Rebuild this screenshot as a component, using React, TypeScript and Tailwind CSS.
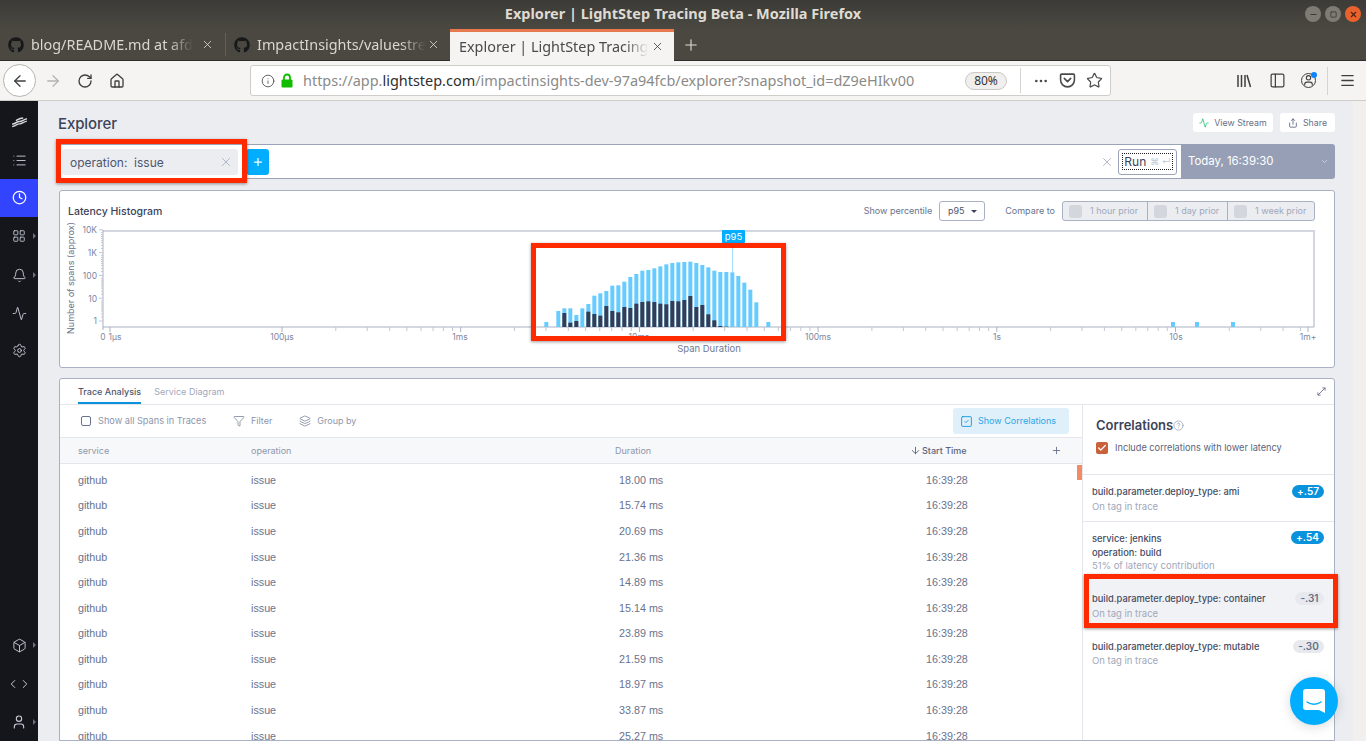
import React from "react";
import {
  X, Plus, ArrowLeft, ArrowRight, RotateCw, Home, Info, Star, Activity, Share, Filter, Layers,
  ArrowDown, SquareCheck, Check, HelpCircle, List, Clock, LayoutGrid, Bell, Settings, Box, ChevronLeft,
  ChevronRight, User, ChevronDown, Menu, PanelLeft, MoreHorizontal, Minus, Square,
} from "lucide-react";
import { FaGithub } from "react-icons/fa";

const light: [number, number][] = [[73,291],[109,258],[127,250],[145,250],[163,270],[181,250],[199,237],[217,212],[235,205],[253,198],[271,182],[289,181],[307,170],[325,156],[343,147],[361,137],[379,135],[397,130],[415,124],[433,118],[451,114],[469,112],[487,111],[505,110],[523,114],[541,120],[559,127],[577,137],[595,141],[613,141],[631,142],[649,153],[667,173],[685,194],[703,232],[739,291]];
const dark: [number, number][] = [[127,264],[145,293],[163,288],[199,260],[217,267],[235,272],[253,243],[271,258],[289,262],[307,246],[325,249],[343,236],[361,231],[379,229],[397,231],[415,236],[433,238],[451,228],[469,229],[487,225],[505,213],[523,246],[541,240],[559,268],[577,286],[595,303],[613,305]];

const rows = ["18.00","15.74","20.69","21.36","14.89","15.14","23.89","21.59","18.97","33.87","25.27"];
const decades = [282, 460.7, 639.4, 818.1, 996.8, 1175.5];
const minor = [2,3,4,5,6,7,8,9].map((n) => Math.log10(n) * 178.7);
const xTicks: number[] = [];
decades.forEach((d, i) => {
  minor.forEach((m) => {
    const t = d + m;
    if (i < 5 || t < 1304) xTicks.push(t);
  });
});
const xLabels: [string, number][] = [["0",103],["1µs",115],["100µs",282],["1ms",460],["10ms",639],["100ms",818],["1s",997],["10s",1176],["1m+",1308]];
const yLabels: [string, number][] = [["10K",230],["1K",253],["100",276],["10",299],["1",321]];

function Chart() {
  return (
    <svg viewBox="60 225 1273 131" className="block h-[131px] w-[1273px] overflow-visible" style={{ fontFamily: "Inter, sans-serif" }}>
      <path d="M103 231H1314V327" fill="none" stroke="#d3d6df" strokeWidth="2" />
      <path d="M103 230V330M103 327H1314" fill="none" stroke="#a9b1c4" strokeWidth="1" />
      {[0,1,2,3,4].map((k) =>
        [0,4,7,10,12,14,16,18,20].map((o) =>
          k === 4 && o > 0 ? null : <line key={`${k}${o}`} x1={o === 0 ? 99 : 101} x2="103" y1={321 - k * 22.8 + (o ? -o : 0)} y2={321 - k * 22.8 + (o ? -o : 0)} stroke="#c3c8d5" strokeWidth="1" />
        )
      )}
      {yLabels.map(([t, y]) => (
        <text key={t} x="97" y={y + 3} textAnchor="end" fontSize="8.5" fill="#7d88a3">{t}</text>
      ))}
      <text transform="translate(74 278) rotate(-90)" textAnchor="middle" fontSize="9" fill="#69738d">Number of spans (approx)</text>
      {xTicks.map((t, i) => (
        <line key={i} x1={t} x2={t} y1="327" y2="331" stroke="#c3c8d5" />
      ))}
      {[110, ...decades, 1308].map((t) => (
        <line key={t} x1={t} x2={t} y1="327" y2="332" stroke="#a9b1c4" />
      ))}
      {xLabels.map(([t, x]) => (
        <text key={t} x={x} y="340" textAnchor="middle" fontSize="8.5" fill="#7d88a3">{t}</text>
      ))}
      <text x="709" y="352" textAnchor="middle" fontSize="9.5" fill="#6f7a94">Span Duration</text>
      {light.map(([x, y]) => (
        <rect key={x} x={520 + x / 3} y={225 + y / 3} width="4" height={327 - 225 - y / 3} fill="#66ccff" />
      ))}
      {dark.map(([x, y]) => (
        <rect key={x} x={520 + x / 3} y={225 + y / 3} width="4" height={327 - 225 - y / 3} fill="#363c54" />
      ))}
      {[1171, 1195, 1231].map((x) => (
        <rect key={x} x={x} y="322" width="4" height="5" fill="#66ccff" />
      ))}
      <line x1="732.5" x2="732.5" y1="243" y2="272" stroke="#a6dffc" />
      <rect x="722" y="230" width="23" height="13" rx="1" fill="#00adff" />
      <text x="733.5" y="240" textAnchor="middle" fontSize="9.5" fill="#ffffff">p95</text>
    </svg>
  );
}

function TabItem({ title, w, close }: { title: string; w: string; close: string }) {
  return (
    <div className={`flex h-full items-center ${w} pl-2 relative`}>
      <FaGithub size={16} color="#17181a" className="shrink-0" />
      <span className="ml-[7px] whitespace-nowrap text-[14.4px] text-[#d9d7d1]" style={{ maskImage: "linear-gradient(to right, black 85%, transparent)" }}>{title}</span>
      <X size={13} className={`absolute ${close} text-[#dddbd6]`} strokeWidth={1.5} />
    </div>
  );
}

function Corr({ lines, sub, val, pos, cls, pill, subCls = "" }: { lines: string[]; sub: string; val: string; pos: boolean; cls: string; pill: string; subCls?: string }) {
  return (
    <div className={`relative pl-[9px] ${cls}`}>
      {lines.map((l) => (
        <div key={l} className="text-[9.3px] leading-[14px] text-[#454b61] font-medium">{l}</div>
      ))}
      <div className={`text-[9.5px] leading-[14px] text-[#a0a8bc] ${subCls}`}>{sub}</div>
      <span className={`absolute right-[10px] top-[10px] h-[13px] ${pill} rounded-full text-[10px] font-semibold leading-[13px] text-center ${pos ? "bg-[#0a93dc] text-white" : "bg-[#e7e9ee] text-[#666e85]"}`}>{val}</span>
    </div>
  );
}

const Nav = ({ children, cls = "h-[38px]" }: { children: React.ReactNode; cls?: string }) => (
  <div className={`flex w-full items-center justify-center text-[#c5c9d3] relative ${cls}`}>{children}</div>
);
const Caret = () => <span className="absolute right-[2px] top-1/2 -mt-[3px] h-0 w-0 border-y-[3px] border-l-[3px] border-y-transparent border-l-[#6a6f7d]" />;

export default function App() {
  return (
    <div className="relative flex h-[741px] w-[1366px] flex-col overflow-hidden bg-[#ebedf1]" style={{ fontFamily: "Inter, sans-serif" }}>
      {/* title bar */}
      <div className="relative h-[29px] shrink-0 bg-gradient-to-b from-[#3c3b37] to-[#4a4841] text-center text-[14.5px] font-bold leading-[27px] text-[#dfdbd2]" style={{ fontFamily: "'Noto Sans', sans-serif" }}>
        Explorer | LightStep Tracing Beta - Mozilla Firefox
        <div className="absolute right-[5px] top-[6px] flex gap-1">
          <span className="flex h-4 w-4 items-center justify-center rounded-full bg-[#7d7b74]"><Minus size={9} color="#3c3b37" strokeWidth={3} /></span>
          <span className="flex h-4 w-4 items-center justify-center rounded-full bg-[#7d7b74]"><Square size={7} color="#3c3b37" strokeWidth={3} /></span>
          <span className="flex h-4 w-4 items-center justify-center rounded-full bg-[#e9622d]"><X size={9} color="#4a2212" strokeWidth={3} /></span>
        </div>
      </div>
      {/* tabs */}
      <div className="flex h-[32px] shrink-0 items-stretch bg-[#4a4841] border-b border-[#2e2d29]" style={{ fontFamily: "'Noto Sans', sans-serif" }}>
        <TabItem title="blog/README.md at afd" w="w-[225px]" close="left-[201px]" />
        <div className="my-[4px] w-px bg-[#63615a]" />
        <TabItem title="ImpactInsights/valuestre" w="w-[224px]" close="left-[201px]" />
        <div className="relative flex h-[32px] w-[224px] items-center border-t-[3px] border-[#e8784d] bg-[#f5f4f2] pl-[9px]">
          <span className="whitespace-nowrap text-[14.4px] text-[#4a4a48]" style={{ maskImage: "linear-gradient(to right, black 88%, transparent)" }}>Explorer | LightStep Tracing</span>
          <X size={13} className="absolute left-[201px] text-[#3b3b3b]" strokeWidth={1.5} />
        </div>
        <div className="flex w-[34px] items-center justify-center"><Plus size={18} color="#dddbd6" strokeWidth={1.5} /></div>
      </div>
      {/* nav */}
      <div className="flex h-[40px] shrink-0 items-center border-b border-[#cfcdc9] bg-[#f5f4f2]">
        <div className="ml-[3px] flex h-[33px] w-[33px] items-center justify-center rounded-full border border-[#b5b3af] bg-white"><ArrowLeft size={18} color="#3f3f3f" strokeWidth={1.7} /></div>
        <ArrowRight size={18} color="#b4b3b0" strokeWidth={1.7} className="ml-[8px]" />
        <RotateCw size={16} color="#3f3f3f" strokeWidth={2} className="ml-[15px]" />
        <Home size={16} color="#3f3f3f" strokeWidth={2} className="ml-[16px]" />
        <div className="ml-[125px] flex h-[31px] w-[861px] items-center rounded-[3px] border border-[#cfcdc9] bg-white pl-[10px] text-[14.45px] text-[#8a8a88]" style={{ fontFamily: "'Noto Sans', sans-serif" }}>
          <Info size={14} color="#5a5a5a" strokeWidth={1.6} />
          <svg viewBox="0 0 12 15" className="ml-[6px] h-[15px] w-[12px] shrink-0"><path d="M3 7V4.5a3 3 0 016 0V7" fill="none" stroke="#12bc00" strokeWidth="1.8" /><rect x="0.5" y="6.5" width="11" height="8" rx="1" fill="#12bc00" /></svg>
          <span className="ml-[10px] w-[662px] whitespace-nowrap">https://app.<span className="text-[#2e2e2e]">lightstep.com</span>/impactinsights-dev-97a94fcb/explorer?snapshot_id=dZ9eHIkv00</span>
          <span className="flex h-[18px] w-[42px] items-center justify-center rounded-full border border-[#c9c8c5] bg-[#f0efed] text-[12px] text-[#333]">80%</span>
          <div className="ml-[13px] h-[25px] w-px bg-[#d5d4d1]" />
          <MoreHorizontal size={16} color="#4a4a4a" className="ml-[12px]" />
          <svg viewBox="0 0 16 16" className="ml-[10px] h-[17px] w-[17px]" fill="none" stroke="#4a4a4a" strokeWidth="1.5" strokeLinecap="round" strokeLinejoin="round"><path d="M2.5 2h11a1 1 0 011 1v4.5a6.5 6.5 0 01-13 0V3a1 1 0 011-1z" /><path d="M5 6l3 3 3-3" /></svg>
          <Star size={17} color="#4a4a4a" strokeWidth={1.7} className="ml-[10px]" />
        </div>
        <svg viewBox="0 0 16 16" className="ml-[125px] h-4 w-4" fill="none" stroke="#3f3f3f" strokeWidth="1.5"><path d="M2 2v12M5.5 2v12M9 2v12M11 2l3.5 12" /></svg>
        <PanelLeft size={17} color="#3f3f3f" strokeWidth={1.7} className="ml-[17px]" />
        <div className="relative ml-[15px]"><User size={15} color="#3f3f3f" className="rounded-full border border-[#3f3f3f]" /><span className="absolute -right-px -top-px h-[6px] w-[6px] rounded-full bg-[#0a84ff]" /></div>
        <div className="ml-[11px] h-[28px] w-px bg-[#d5d4d1]" />
        <Menu size={17} color="#3f3f3f" strokeWidth={1.8} className="ml-[11px]" />
      </div>
      {/* body */}
      <div className="flex min-h-0 flex-1">
        <aside className="flex w-[38px] shrink-0 flex-col bg-[#14161c]">
          <Nav cls="h-[42px]">
            <svg viewBox="0 0 18 12" className="h-[11px] w-[17px]" fill="none" stroke="#d5d8df" strokeWidth="1.6"><path d="M1 8c4-1 5-3 8-3s4-2 8-3M1 10.5c4-1 5-3 8-3s4-2 8-3M5 4c2-1 4-3 8-3" /></svg>
          </Nav>
          <Nav cls="h-[36px] pb-[2px]"><List size={15} strokeWidth={1.5} /></Nav>
          <div className="flex h-[38px] items-center justify-center bg-[#3344ff] pb-[1px]"><Clock size={15} color="#ffffff" strokeWidth={2} /></div>
          <Nav><LayoutGrid size={14} strokeWidth={1.5} /><Caret /></Nav>
          <Nav cls="h-[39px] pt-[2px]"><Bell size={15} strokeWidth={1.5} /><Caret /></Nav>
          <Nav><Activity size={15} strokeWidth={1.5} /></Nav>
          <Nav cls="h-[38px] pb-px"><Settings size={15} strokeWidth={1.5} /></Nav>
          <div className="flex-1" />
          <Nav><Box size={15} strokeWidth={1.5} /><Caret /></Nav>
          <Nav cls="h-[39px]"><ChevronLeft size={14} strokeWidth={1.7} /><ChevronRight size={14} strokeWidth={1.7} className="-ml-[2px]" /></Nav>
          <Nav><User size={16} strokeWidth={1.7} /><Caret /></Nav>
        </aside>
        <main className="flex min-w-0 flex-1 flex-col pl-[18px] pr-[18px]">
          <div className="flex h-[43px] shrink-0 items-start justify-between">
            <h1 className="pl-[2px] pt-[13px] text-[15px] font-medium leading-[20px] text-[#3c4358] -tracking-[0.1px]">Explorer</h1>
            <div className="flex gap-[7px] pt-[12px]">
              <div className="flex h-[19px] w-[80px] items-center justify-center gap-[5px] rounded-[3px] bg-white text-[8.8px] text-[#687189]"><Activity size={10} color="#2fc27d" />View Stream</div>
              <div className="flex h-[19px] w-[55px] items-center justify-center gap-[5px] rounded-[3px] bg-white text-[8.8px] text-[#687189]"><Share size={10} color="#5a6278" />Share</div>
            </div>
          </div>
          {/* search */}
          <div className="flex h-[35px] shrink-0 items-stretch">
            <div className="flex flex-1 items-center border-y border-[#9aa3b8] bg-white pl-[6px] pr-[4px]">
              <div className="flex h-[26px] w-[176px] items-center justify-between rounded-[3px] bg-[#ebedf1] pl-2 pr-[5px] text-[12px] text-[#4e566d]">
                <span className="whitespace-pre pt-[2px]">operation:  issue</span>
                <X size={14} color="#9aa3b8" strokeWidth={1.3} />
              </div>
              <div className="ml-[8px] flex h-[26px] w-[23px] items-center justify-center rounded-[3px] bg-[#00adff]"><Plus size={12} color="#fff" strokeWidth={2.5} /></div>
              <div className="flex-1" />
              <X size={14} color="#9aa3b8" strokeWidth={1.3} />
              <div className="ml-[4px] flex h-[26px] w-[59px] items-center justify-center rounded-[3px] border border-[#9aa3b8] bg-white">
                <span className="flex h-[17px] items-center gap-1 border border-dotted border-[#222] px-[1px] text-[12px] text-[#3c4358]">Run<span className="text-[9px] text-[#c5c9d3]">⌘ ↵</span></span>
              </div>
            </div>
            <div className="flex w-[154px] items-center justify-between rounded-r-[3px] bg-[#969fb6] pl-[7px] pr-[6px] text-[11.4px] font-normal text-white">
              Today, 16:39:30
              <ChevronDown size={9} color="#d8dce6" />
            </div>
          </div>
          {/* histogram */}
          <section className="mt-[11px] ml-[3px] h-[178px] shrink-0 rounded-[3px] border border-[#a9b1c4] bg-white">
            <div className="flex h-[34px] items-start justify-between pl-[8px] pr-[19px] pt-[10px]">
              <h2 className="pt-[4px] text-[10.5px] font-medium leading-[14px] text-[#3c4358]">Latency Histogram</h2>
              <div className="flex items-center text-[9px] text-[#69738d]">
                <span>Show percentile</span>
                <span className="ml-[7px] flex h-[20px] w-[46px] items-center justify-center gap-[6px] rounded-[3px] border border-[#a9b1c4] text-[#4e566d]">p95<span className="h-0 w-0 border-x-[3px] border-t-[3px] border-x-transparent border-t-[#3c4358]" /></span>
                <span className="ml-[20px]">Compare to</span>
                <div className="ml-[7px] flex h-[20px] w-[253px] overflow-hidden rounded-[3px] border border-[#a9b1c4] bg-[#ebedf1] text-[#a0a8bc]">
                  {[["1 hour prior", "w-[85px]"],["1 day prior", "w-[80px]"],["1 week prior", "flex-1"]].map(([t, w]) => (
                    <span key={t} className={`flex ${w} items-center gap-2 border-r border-[#a9b1c4] pl-[6px] last:border-r-0`}><span className="h-[13px] w-[13px] rounded-[3px] bg-[#d3d6dc]" />{t}</span>
                  ))}
                </div>
              </div>
            </div>
            <Chart />
          </section>
          {/* bottom panel */}
          <section className="mt-[10px] ml-[3px] flex min-h-0 flex-1 flex-col overflow-hidden rounded-t-[3px] border border-[#a9b1c4] bg-white">
            <div className="relative flex h-[26px] shrink-0 gap-[13px] border-b border-[#e4e6ec] pl-[18px] text-[9px]">
              <span className="h-[25px] border-b-2 border-[#0a93dc] pt-[6px] font-medium text-[#4e566d] leading-[14px]">Trace Analysis</span>
              <span className="pt-[6px] text-[#a0a8bc] leading-[14px]">Service Diagram</span>
              <svg viewBox="0 0 10 10" className="absolute right-[8px] top-[8px] h-[9px] w-[9px]" fill="none" stroke="#69738d"><path d="M1 9l8-8M6 1h3v3M1 6v3h3" /></svg>
            </div>
            <div className="flex min-h-0 flex-1">
              <div className="flex min-w-0 flex-1 flex-col border-r border-[#e4e6ec] relative">
                <div className="flex h-[32px] shrink-0 items-center pl-[21px] text-[9px] text-[#8d96ad]">
                  <span className="h-[10px] w-[10px] rounded-[2px] border border-[#69738d]" />
                  <span className="ml-[7px] w-[109px] whitespace-nowrap text-[9.2px]">Show all Spans in Traces</span>
                  <Filter size={12} className="ml-[26px]" strokeWidth={1.4} color="#69738d" />
                  <span className="ml-[6px]">Filter</span>
                  <Layers size={12} className="ml-[27px]" strokeWidth={1.4} color="#69738d" />
                  <span className="ml-[6px]">Group by</span>
                  <div className="flex-1" />
                  <div className="mr-[13px] flex h-[26px] w-[116px] items-center gap-[5px] rounded-[3px] bg-[#dff0fa] pl-[7px] text-[#2aa5e8]"><SquareCheck size={13} strokeWidth={1.6} color="#0a93dc" />Show Correlations</div>
                </div>
                <div className="flex h-[27px] shrink-0 items-center border-y border-[#e4e6ec] bg-[#f7f8fa] pl-[18px] text-[9px] text-[#8d96ad]">
                  <span className="w-[173px]">service</span>
                  <span className="w-[364px]">operation</span>
                  <span className="w-[295px]">Duration</span>
                  <span className="flex w-[141px] items-center font-medium text-[#5c647b]"><ArrowDown size={11} className="mr-px" />Start Time</span>
                  <Plus size={11} color="#69738d" />
                </div>
                <div className="flex flex-col pt-[3px]">
                  {rows.map((d) => (
                    <div key={d} className="flex h-[25.6px] shrink-0 items-center pl-[18px] text-[10.75px] text-[#69738d]" style={{ fontFamily: "'Liberation Sans', sans-serif" }}>
                      <span className="w-[173px]">github</span>
                      <span className="w-[368px]">issue</span>
                      <span className="w-[307px]">{d} ms</span>
                      <span>16:39:28</span>
                    </div>
                  ))}
                </div>
                <span className="absolute right-0 top-[60px] h-[15px] w-[5px] bg-[#f28c64]" />
              </div>
              <aside className="w-[251px] shrink-0">
                <div className="h-[70px] border-b border-[#e4e6ec] pl-[13px] pt-[12px]">
                  <div className="flex items-center gap-0 text-[13px] font-semibold leading-[17px] text-[#3c4358]">Correlations<HelpCircle size={11} color="#8d96ad" strokeWidth={1.5} /></div>
                  <div className="mt-[7px] flex items-center gap-[7px] text-[9.2px] text-[#5c647b]">
                    <span className="flex h-[12px] w-[12px] items-center justify-center rounded-[2px] bg-[#c9623a]"><Check size={10} color="#fff" strokeWidth={3} /></span>
                    Include correlations with lower latency
                  </div>
                </div>
                <Corr lines={["build.parameter.deploy_type: ami"]} sub="On tag in trace" val="+.57" pos cls="h-[47px] pt-[10px] border-b border-[#e4e6ec]" pill="w-[32px]" subCls="mt-px" />
                <Corr lines={["service: jenkins", "operation: build"]} sub="51% of latency contribution" val="+.54" pos cls="h-[56px] pt-[10px]" pill="w-[33px] !top-[9px]" subCls="-mt-px" />
                <div className="relative h-[44px]"><Corr lines={["build.parameter.deploy_type: container"]} sub="On tag in trace" val="-.31" pos={false} cls="h-[48px] pt-[17px] bg-[#f1f2f5] -mt-[3px]" pill="w-[29px] !top-[17px]" subCls="mt-px" /></div>
                <Corr lines={["build.parameter.deploy_type: mutable"]} sub="On tag in trace" val="-.30" pos={false} cls="h-[47px] pt-[21px]" pill="w-[31px] !top-[21px]" />
              </aside>
            </div>
          </section>
        </main>
        <div className="w-[13px] shrink-0 bg-[#f1f0ee]" />
      </div>
      {/* annotation boxes and chat launcher */}
      <div className="absolute left-[56px] top-[139px] h-[44px] w-[191px] border-[5px] border-[#ff2a00] shadow-[0_1px_3px_rgba(0,0,0,0.4)]" />
      <div className="absolute left-[531px] top-[243px] h-[98px] w-[255px] border-[5px] border-[#ff2a00] shadow-[0_1px_3px_rgba(0,0,0,0.4)]" />
      <div className="absolute left-[1084px] top-[574px] h-[54px] w-[254px] border-[5px] border-[#ff2a00] shadow-[0_1px_3px_rgba(0,0,0,0.4)]" />
      <div className="absolute left-[1290px] top-[677px] flex h-[48px] w-[48px] items-center justify-center rounded-full bg-[#00adff] shadow-[0_2px_12px_rgba(0,0,0,0.15)]">
        <svg viewBox="0 0 22 24" className="h-[24px] w-[22px]"><path d="M3 0h16a3 3 0 013 3v21l-6-3H3a3 3 0 01-3-3V3a3 3 0 013-3z" fill="#fff" /><path d="M4 13c4 3 10 3 14 0" stroke="#00adff" strokeWidth="1.5" fill="none" strokeLinecap="round" /></svg>
      </div>
    </div>
  );
}
